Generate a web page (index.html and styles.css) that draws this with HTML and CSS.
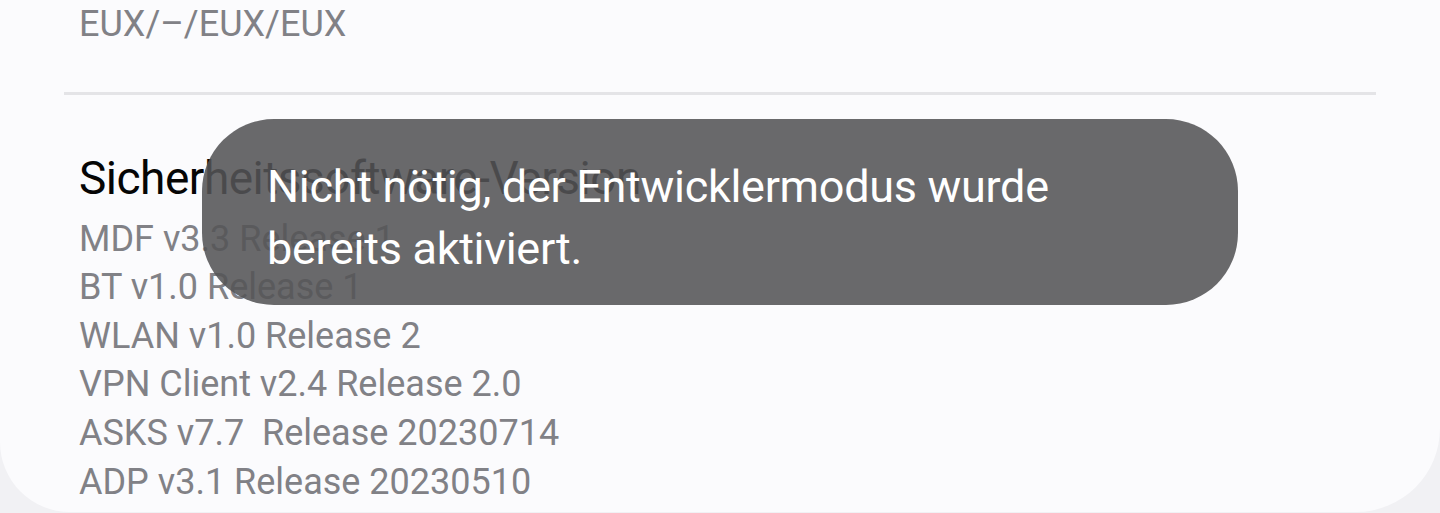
FILE: index.html
```html
<!DOCTYPE html>
<html lang="de">
<head>
    <meta charset="UTF-8">
    <meta name="viewport" content="width=device-width, initial-scale=1.0">
    <title>Softwareinformationen</title>
    <link rel="stylesheet" href="styles.css">
</head>
<body>
    <div class="card">
        <div class="item item-top">
            <p class="value">EUX/–/EUX/EUX</p>
        </div>
        <hr class="divider">
        <div class="item">
            <h2 class="title">Sicherheitssoftware-Version</h2>
            <p class="value">MDF v3.3 Release 1</p>
            <p class="value">BT v1.0 Release 1</p>
            <p class="value">WLAN v1.0 Release 2</p>
            <p class="value">VPN Client v2.4 Release 2.0</p>
            <p class="value">ASKS v7.7&nbsp; Release 20230714</p>
            <p class="value">ADP v3.1 Release 20230510</p>
        </div>
    </div>

    <div class="toast">Nicht nötig, der Entwicklermodus wurde<br>bereits aktiviert.</div>
</body>
</html>
```

FILE: styles.css
```css
html, body {
    margin: 0;
    height: 513px;
    overflow: hidden;
}
body {
    font-family: Roboto, "Noto Sans", sans-serif;
    background-color: #f1f1f4;
    position: relative;
}
.card {
    background: #fbfbfd;
    height: 512px;
    border-radius: 0 0 84px 70px;
    overflow: hidden;
}
.item {
    padding: 0 79px;
}
.item-top {
    padding-bottom: 43px;
}
.value {
    margin: 0;
    font-size: 36px;
    line-height: 48.6px;
    color: #818186;
    letter-spacing: 0;
}
.title {
    margin: 0 0 6px;
    padding-top: 52px;
    font-size: 46px;
    font-weight: 400;
    line-height: 62px;
    color: #050505;
    letter-spacing: -0.5px;
}
.divider {
    margin: 0 64px;
    border: none;
    height: 3px;
    background: #e4e4e7;
}
.toast {
    position: absolute;
    left: 202px;
    top: 119px;
    width: 1036px;
    height: 186px;
    box-sizing: border-box;
    padding: 37px 0 0 65px;
    border-radius: 72px;
    background: rgba(84, 84, 86, 0.88);
    color: #ffffff;
    font-size: 45px;
    line-height: 62px;
    letter-spacing: -0.3px;
}
```
